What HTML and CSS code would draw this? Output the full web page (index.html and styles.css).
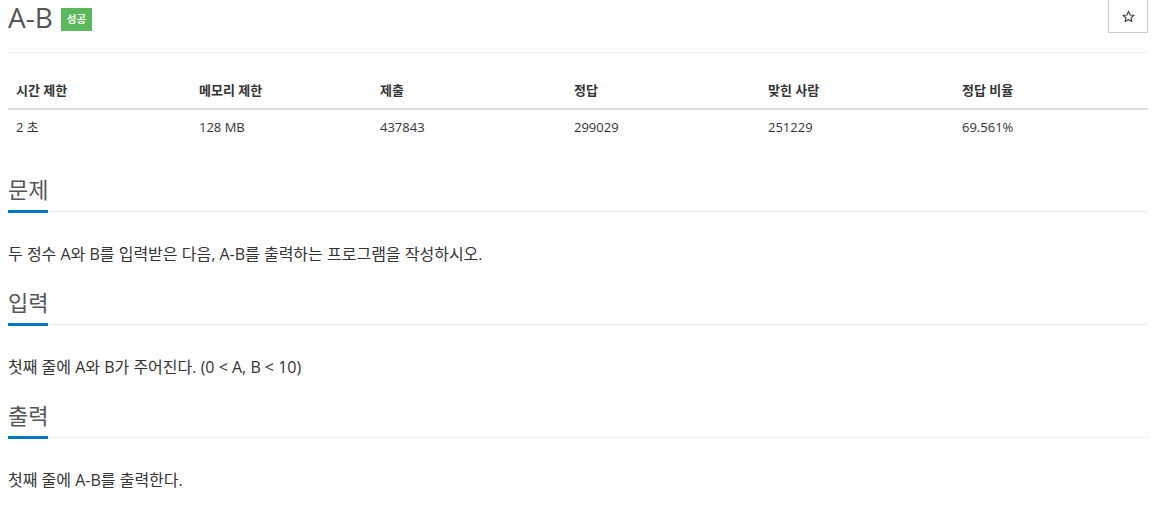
FILE: index.html
```html
<!DOCTYPE html>
<html lang="ko">
<head>
<meta charset="utf-8">
<title>A-B</title>
<link rel="stylesheet" href="styles.css">
</head>
<body>
<div class="container">
  <div class="page-header">
    <h1 class="title">A-B <span class="badge">성공</span></h1>
    <button class="star-btn" type="button" aria-label="즐겨찾기">
      <svg width="13" height="13" viewBox="0 0 24 24"><path d="M12 2.5l2.9 6.6 7.1.6-5.4 4.7 1.6 7-6.2-3.7-6.2 3.7 1.6-7L2 9.7l7.1-.6z" fill="none" stroke="#333" stroke-width="2" stroke-linejoin="round"/></svg>
    </button>
  </div>

  <table class="info">
    <thead>
      <tr>
        <th class="c1">시간 제한</th>
        <th class="c2">메모리 제한</th>
        <th class="c3">제출</th>
        <th class="c4">정답</th>
        <th class="c5">맞힌 사람</th>
        <th class="c6">정답 비율</th>
      </tr>
    </thead>
    <tbody>
      <tr>
        <td>2 초</td>
        <td>128 MB</td>
        <td>437843</td>
        <td>299029</td>
        <td>251229</td>
        <td>69.561%</td>
      </tr>
    </tbody>
  </table>

  <section class="section first">
    <div class="headline"><h2>문제</h2></div>
    <p class="text">두 정수 A와 B를 입력받은 다음, A-B를 출력하는 프로그램을 작성하시오.</p>
  </section>

  <section class="section">
    <div class="headline"><h2>입력</h2></div>
    <p class="text">첫째 줄에 A와 B가 주어진다. (0 &lt; A, B &lt; 10)</p>
  </section>

  <section class="section">
    <div class="headline"><h2>출력</h2></div>
    <p class="text">첫째 줄에 A-B를 출력한다.</p>
  </section>
</div>
</body>
</html>
```

FILE: styles.css
```css
html, body {
  margin: 0;
  padding: 0;
  background: #fff;
}

body {
  font-family: "Open Sans", "Noto Sans CJK KR", sans-serif;
  color: #333;
  font-size: 13px;
}

.container {
  padding: 0 21px 0 8px;
}

.page-header {
  display: flex;
  justify-content: space-between;
  align-items: flex-start;
  height: 52px;
  border-bottom: 1px solid #eee;
}

.title {
  margin: 0;
  font-size: 28px;
  font-weight: 400;
  line-height: 34px;
  color: #555;
  display: flex;
  align-items: center;
}

.badge {
  display: inline-block;
  margin-left: 8px;
  margin-top: 5px;
  background: #5cb85c;
  color: #fff;
  font-size: 10.5px;
  font-weight: 700;
  line-height: 23px;
  height: 23px;
  padding: 0 6px;
  letter-spacing: 0;
}

.star-btn {
  width: 40px;
  height: 34px;
  margin-top: -1px;
  background: #fff;
  border: 1px solid #ccc;
  padding: 0;
  display: flex;
  align-items: center;
  justify-content: center;
}

.info {
  width: 100%;
  border-collapse: collapse;
  margin-top: 19px;
  table-layout: fixed;
}

.info th,
.info td {
  text-align: left;
  padding: 8px;
  line-height: 20px;
  font-size: 13px;
}

.info td {
  padding-top: 7px;
}

.info th {
  font-weight: 700;
  border-bottom: 2px solid #ddd;
}

.info .c1 { width: 167px; }
.info .c2 { width: 165px; }
.info .c3 { width: 178px; }
.info .c4 { width: 178px; }
.info .c5 { width: 178px; }

.section {
  margin-top: 21px;
}

.section.first {
  margin-top: 29px;
}

.headline {
  display: flex;
  border-bottom: 1px dotted #ddd;
}

.headline h2 {
  margin: 0 0 -2px 0;
  font-size: 22px;
  font-weight: 400;
  line-height: 30px;
  padding-bottom: 6px;
  color: #555;
  border-bottom: 3px solid #0076c0;
}

.text {
  margin: 30px 0 0 0;
  font-size: 16px;
  line-height: 24px;
  color: #333;
}
```
